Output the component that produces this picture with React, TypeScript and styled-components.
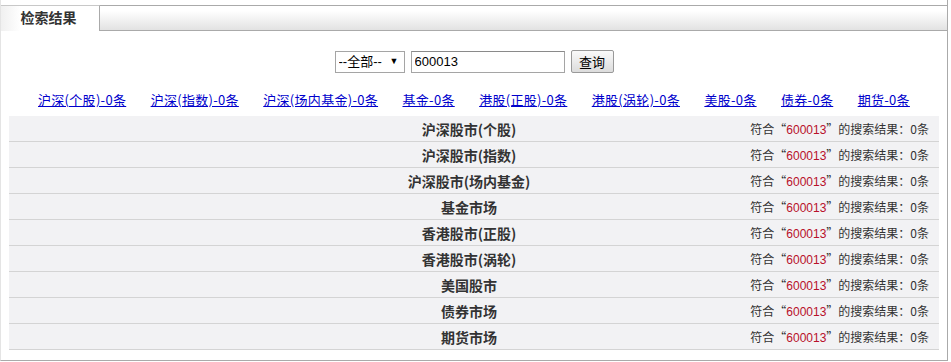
import React from 'react';
import styled, {createGlobalStyle} from "styled-components";

const GlobalStyle = createGlobalStyle`
    body {
        margin: 0;
        background: #fff;
        font-family: "Liberation Sans", "Noto Sans CJK SC", sans-serif;
        color: #333;
    }
`

const markets = [
    {link: "沪深(个股)-0条", title: "沪深股市(个股)"},
    {link: "沪深(指数)-0条", title: "沪深股市(指数)"},
    {link: "沪深(场内基金)-0条", title: "沪深股市(场内基金)"},
    {link: "基金-0条", title: "基金市场"},
    {link: "港股(正股)-0条", title: "香港股市(正股)"},
    {link: "港股(涡轮)-0条", title: "香港股市(涡轮)"},
    {link: "美股-0条", title: "美国股市"},
    {link: "债券-0条", title: "债券市场"},
    {link: "期货-0条", title: "期货市场"},
];

const keyword = "600013";

export default function App() {
    return (
        <>
            <GlobalStyle/>
            <Panel>
                <Header>
                    <Tab>检索结果</Tab>
                    <HeaderFill/>
                </Header>
                <SearchForm>
                    <SelectWrap>
                        <Select defaultValue="all">
                            <option value="all">--全部--</option>
                        </Select>
                    </SelectWrap>
                    <Input defaultValue={keyword}/>
                    <Button>查询</Button>
                </SearchForm>
                <LinkRow>
                    {markets.map(m => <MarketLink key={m.link} href="#">{m.link}</MarketLink>)}
                </LinkRow>
                <Table>
                    {markets.map(m => (
                        <Row key={m.title}>
                            <span/>
                            <RowTitle>{m.title}</RowTitle>
                            <RowCount>符合“<Keyword>{keyword}</Keyword>”的搜索结果：0条</RowCount>
                        </Row>
                    ))}
                </Table>
            </Panel>
        </>
    );
}

const Panel = styled.div`
    box-sizing: border-box;
    width: 948px;
    height: 361px;
    padding-top: 5px;
    border-right: 1px solid #aaa;
    border-bottom: 1px solid #aaa;
    border-left: 1px solid #e4e4e4;
`

const Header = styled.div`
    display: flex;
    height: 26px;
`

const Tab = styled.div`
    box-sizing: border-box;
    width: 99px;
    padding-right: 3px;
    border-top: 1px solid #c8c8c8;
    border-right: 1px solid #aaa;
    background: linear-gradient(to right, #f0f0f0, #fff 20%);
    font-family: "Noto Sans CJK SC", sans-serif;
    font-size: 14px;
    font-weight: 700;
    line-height: 23px;
    text-align: center;
    color: #333;
`

const HeaderFill = styled.div`
    flex: 1;
    border-top: 1px solid #aaa;
    border-bottom: 1px solid #aaa;
    background: linear-gradient(to bottom, #fff 20%, #e2e2e2);
`

const SearchForm = styled.div`
    display: flex;
    justify-content: center;
    align-items: center;
    gap: 6px;
    margin-top: 19px;
    height: 23px;
`

const SelectWrap = styled.div`
    position: relative;
    &::after {
        content: '▼';
        position: absolute;
        right: 6px;
        top: 5px;
        font-size: 9px;
        color: #000;
        pointer-events: none;
    }
`

const Select = styled.select`
    appearance: none;
    box-sizing: border-box;
    width: 70px;
    height: 22px;
    padding: 0 0 0 3px;
    border: 1px solid #a5a5a5;
    border-radius: 0;
    background: #fff;
    font-family: "Liberation Sans", "Noto Sans CJK SC", sans-serif;
    font-size: 13px;
    color: #000;
`

const Input = styled.input`
    box-sizing: border-box;
    width: 154px;
    height: 22px;
    padding: 0 3px;
    border: 1px solid #a5a5a5;
    border-top-color: #8a8a8a;
    font-family: "Liberation Sans", sans-serif;
    font-size: 13px;
    color: #000;
    outline: none;
`

const Button = styled.button`
    box-sizing: border-box;
    width: 43px;
    height: 23px;
    padding: 0;
    border: 1px solid #999;
    border-radius: 2px;
    background: linear-gradient(to bottom, #fafafa, #dcdcdc);
    font-family: "Noto Sans CJK SC", sans-serif;
    font-size: 13px;
    color: #000;
`

const LinkRow = styled.div`
    display: flex;
    justify-content: space-between;
    margin-top: 18px;
    padding: 0 37px 0 37px;
    height: 18px;
    line-height: 18px;
`

const MarketLink = styled.a`
    font-family: "Noto Sans CJK SC", sans-serif;
    font-size: 13px;
    letter-spacing: 0.3px;
    color: #0000cc;
    text-decoration: underline;
`

const Table = styled.div`
    margin: 7px 8px 0 8px;
`

const Row = styled.div`
    display: grid;
    grid-template-columns: 1fr auto 1fr;
    align-items: center;
    height: 25px;
    padding-right: 10px;
    background: #f2f2f4;
    border-bottom: 1px solid #d4d4d4;
`

const RowTitle = styled.span`
    font-family: "Noto Sans CJK SC", sans-serif;
    font-size: 14px;
    font-weight: 700;
    color: #333;
`

const RowCount = styled.span`
    justify-self: end;
    font-family: "Noto Sans CJK SC", sans-serif;
    font-size: 12px;
    color: #333;
`

const Keyword = styled.span`
    font-family: "Liberation Sans", sans-serif;
    color: #b8102a;
`
